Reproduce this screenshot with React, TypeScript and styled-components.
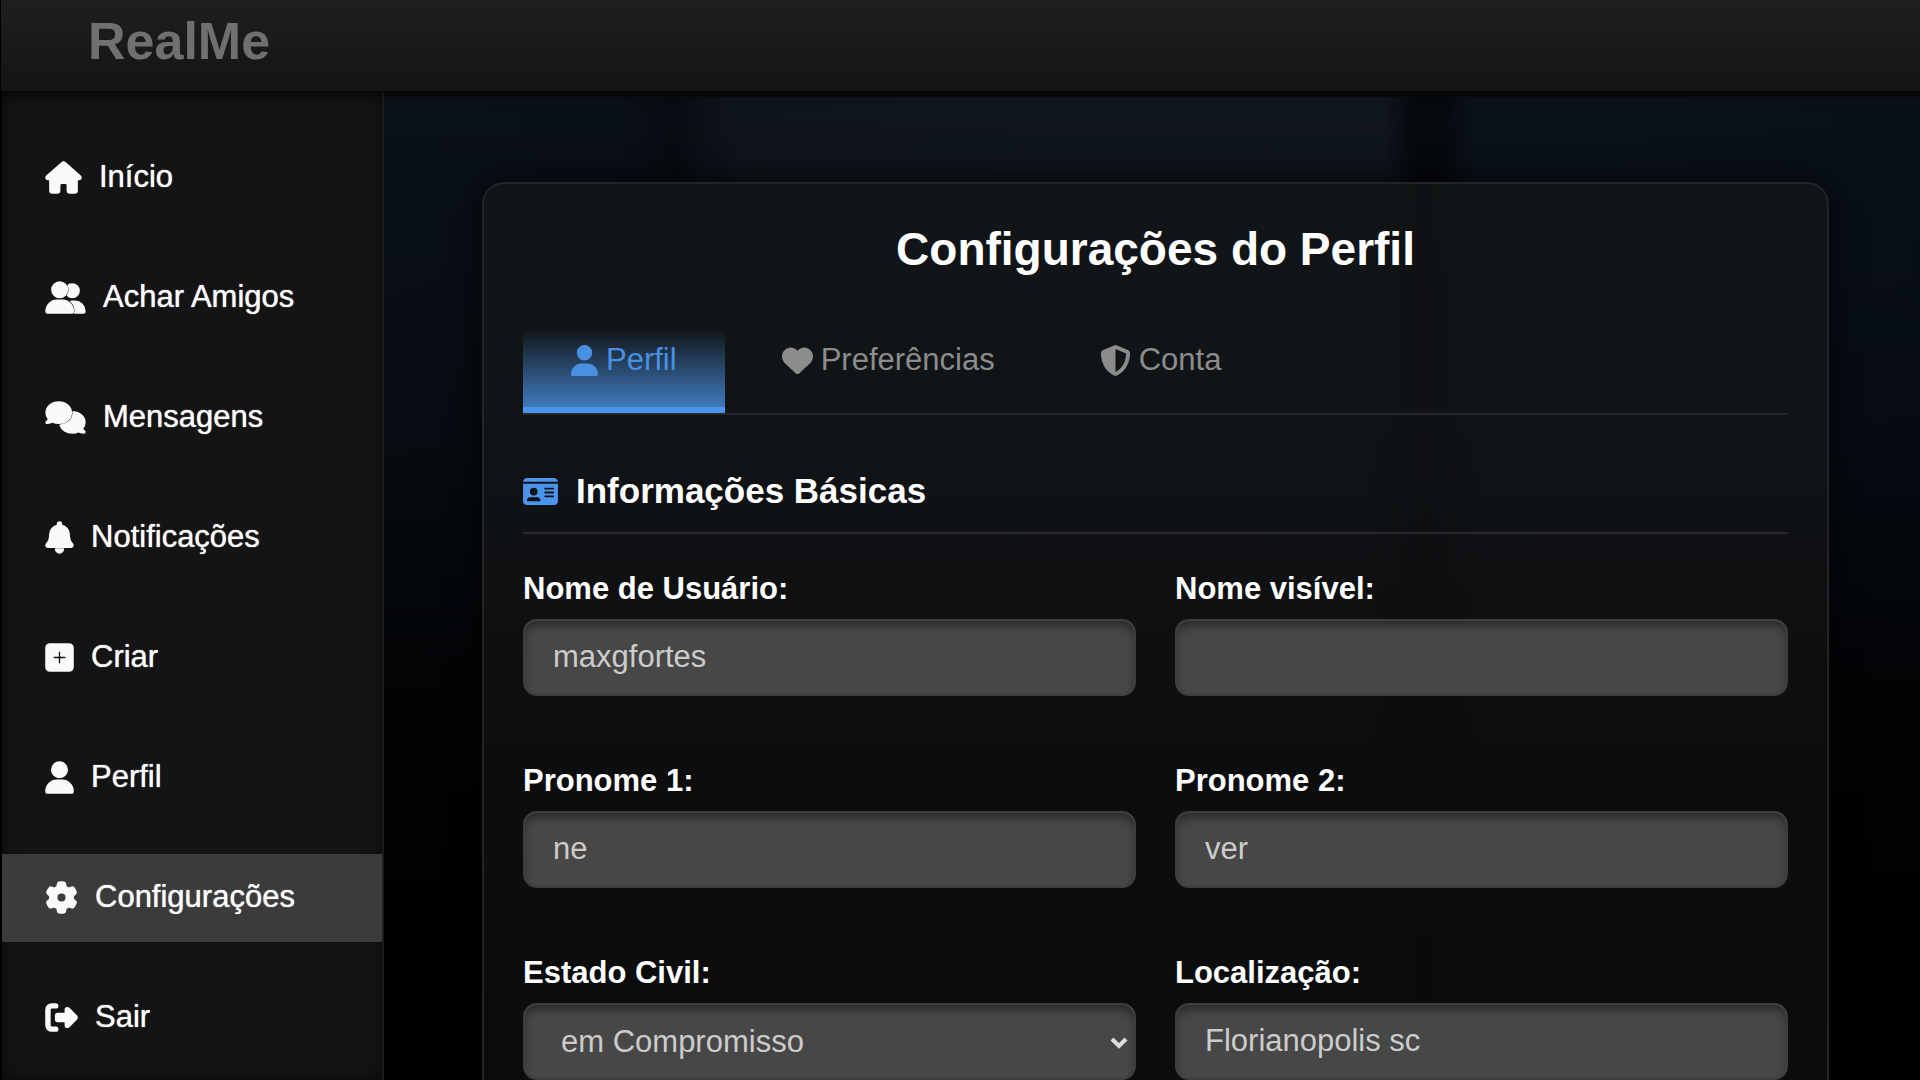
import React, { useState } from "react";
import styled, { createGlobalStyle } from "styled-components";
import type { IconType } from "react-icons";
import {
  FaBell,
  FaComments,
  FaGear,
  FaHeart,
  FaHouse,
  FaIdCard,
  FaRightFromBracket,
  FaShieldHalved,
  FaSquarePlus,
  FaUser,
  FaUserGroup,
} from "react-icons/fa6";

const GlobalStyle = createGlobalStyle`
  * { box-sizing: border-box; }
  body {
    margin: 0;
    background: #000;
    color: #fff;
    font-family: "Liberation Sans", Arial, Helvetica, sans-serif;
    font-size: 31px;
    line-height: 36px;
  }
`;

const Page = styled.div`
  display: flex;
  flex-direction: column;
  height: 100vh;
  overflow: hidden;
`;

const Header = styled.header`
  position: relative;
  z-index: 1;
  flex: none;
  display: flex;
  align-items: center;
  padding: 11px 87px 20px;
  border-left: 1px solid #000;
  background: linear-gradient(#1f1f1f, #141414);
  box-shadow: 0 0 8px 2px rgba(0, 0, 0, 0.7);
`;

const Brand = styled.a`
  color: #707070;
  font-size: 52px;
  font-weight: bold;
  line-height: 60px;
  text-decoration: none;
`;

const Body = styled.div`
  flex: 1;
  min-height: 0;
  display: flex;
`;

const Sidebar = styled.nav`
  flex: none;
  width: 384px;
  padding-top: 43px;
  border-left: 2px solid #000;
  border-right: 2px solid #1b1b1b;
  background: #141414;
  box-shadow: inset 0 0 16px rgba(0, 0, 0, 0.6);
`;

const NavList = styled.ul`
  display: flex;
  flex-direction: column;
  gap: 32px;
  margin: 0;
  padding: 0;
  list-style: none;
`;

/* Font Awesome glyphs share one height; their widths follow the glyph's own units (512 = 1em). */
const Glyph = styled.span<{ $units: number }>`
  flex: none;
  display: block;
  width: ${(p) => Math.round((p.$units / 512) * 31)}px;
  height: 31px;

  svg {
    display: block;
    width: 100%;
    height: 100%;
    overflow: visible;
  }
`;

const NavLink = styled.a<{ $active: boolean }>`
  display: flex;
  align-items: center;
  gap: 18px;
  height: 88px;
  padding: 0 44px 2px;
  background: ${(p) => (p.$active ? "#3b3b3b" : "transparent")};
  color: #fafafa;
  text-decoration: none;
  text-shadow: 0 0 1px #fff;

  ${Glyph} path {
    stroke: currentColor;
    stroke-width: 26;
    stroke-linejoin: round;
  }
`;

const Main = styled.main`
  flex: 1;
  min-width: 0;
  overflow: auto;
  scrollbar-width: none;
  padding: 85px 91px 92px 98px;
  border-top: 6px solid #0a0b0b;
  background:
    linear-gradient(
      rgba(0, 0, 0, 0) 0%,
      rgba(0, 0, 0, 0.3) 35%,
      rgba(0, 0, 0, 0.8) 60%,
      #000 90%
    ),
    linear-gradient(
      90deg,
      #0a1119 0%,
      #0a1019 15%,
      #080c12 19%,
      #0c1118 21%,
      #0f151c 23%,
      #10161e 45%,
      #10161e 65%,
      #06090e 67%,
      #06090e 69%,
      #0b121c 71%,
      #09101a 100%
    );
`;

const Panel = styled.section`
  padding: 37px 39px;
  border: 2px solid #222425;
  border-radius: 22px;
  background:
    linear-gradient(90deg, transparent 65%, rgba(0, 0, 0, 0.15) 70%, transparent 75%),
    linear-gradient(#121517, #111417 25%, #0c0d0e 60%, #0b0c0c);
  box-shadow: 0 0 32px rgba(0, 0, 0, 0.8);
`;

const Title = styled.h1`
  margin: 0;
  font-size: 46px;
  line-height: 56px;
  text-align: center;
`;

const Tabs = styled.div`
  display: flex;
  gap: 9px;
  margin-top: 52px;
  border-bottom: 2px solid #26282a;
`;

const Tab = styled.button<{ $active: boolean }>`
  display: flex;
  align-items: center;
  gap: 8px;
  padding: 13px 48px 29px;
  border: 0;
  border-bottom: 6px solid ${(p) => (p.$active ? "#4a94ee" : "transparent")};
  background: ${(p) =>
    p.$active ? "linear-gradient(rgba(74, 144, 226, 0), rgba(74, 144, 226, 0.82)) padding-box" : "none"};
  color: ${(p) => (p.$active ? "#4a90e2" : "#8c8c8c")};
  font: inherit;
  cursor: pointer;
`;

const SectionTitle = styled.h2`
  display: flex;
  align-items: center;
  gap: 18px;
  margin: 56px 0 0;
  padding-bottom: 21px;
  border-bottom: 2px solid #26282a;
  font-size: 35px;
  line-height: 40px;

  ${Glyph} {
    color: #4a94ee;
  }
`;

const Form = styled.form`
  display: grid;
  grid-template-columns: 1fr 1fr;
  gap: 67px 39px;
  margin-top: 37px;
`;

const Field = styled.div`
  display: flex;
  flex-direction: column;
  gap: 12px;
`;

const Label = styled.label`
  font-weight: bold;
`;

const control = `
  display: block;
  width: 100%;
  height: 77px;
  border: 2px solid #3e3e3e;
  border-radius: 14px;
  background: #474747;
  box-shadow: inset 0 6px 10px -2px rgba(0, 0, 0, 0.45);
  color: #ccc;
  font: inherit;
  outline: none;
`;

const Input = styled.input`
  ${control}
  padding: 0 28px 2px;
`;

const SelectBox = styled.div`
  position: relative;
`;

const Select = styled.select`
  ${control}
  appearance: none;
  padding: 0 60px 0 36px;
`;

const Chevron = styled.svg`
  position: absolute;
  top: 34px;
  right: 8px;
  width: 18px;
  height: 12px;
  pointer-events: none;
`;

type Item = { label: string; icon: IconType; units: number };

const NAV: Item[] = [
  { label: "Início", icon: FaHouse, units: 576 },
  { label: "Achar Amigos", icon: FaUserGroup, units: 640 },
  { label: "Mensagens", icon: FaComments, units: 640 },
  { label: "Notificações", icon: FaBell, units: 448 },
  { label: "Criar", icon: FaSquarePlus, units: 448 },
  { label: "Perfil", icon: FaUser, units: 448 },
  { label: "Configurações", icon: FaGear, units: 512 },
  { label: "Sair", icon: FaRightFromBracket, units: 512 },
];

const TABS: Item[] = [
  { label: "Perfil", icon: FaUser, units: 448 },
  { label: "Preferências", icon: FaHeart, units: 512 },
  { label: "Conta", icon: FaShieldHalved, units: 512 },
];

function TextField({ id, label, value = "" }: { id: string; label: string; value?: string }) {
  return (
    <Field>
      <Label htmlFor={id}>{label}</Label>
      <Input id={id} name={id} type="text" defaultValue={value} />
    </Field>
  );
}

export default function App() {
  const [tab, setTab] = useState("Perfil");

  return (
    <Page>
      <GlobalStyle />
      <Header>
        <Brand href="#">RealMe</Brand>
      </Header>
      <Body>
        <Sidebar>
          <NavList>
            {NAV.map(({ label, icon: Icon, units }) => (
              <li key={label}>
                <NavLink href="#" $active={label === "Configurações"}>
                  <Glyph $units={units} aria-hidden>
                    <Icon />
                  </Glyph>
                  {label}
                </NavLink>
              </li>
            ))}
          </NavList>
        </Sidebar>
        <Main>
          <Panel>
            <Title>Configurações do Perfil</Title>
            <Tabs role="tablist">
              {TABS.map(({ label, icon: Icon, units }) => (
                <Tab
                  key={label}
                  type="button"
                  role="tab"
                  aria-selected={tab === label}
                  $active={tab === label}
                  onClick={() => setTab(label)}
                >
                  <Glyph $units={units} aria-hidden>
                    <Icon />
                  </Glyph>
                  {label}
                </Tab>
              ))}
            </Tabs>
            <SectionTitle>
              <Glyph $units={576} aria-hidden>
                <FaIdCard />
              </Glyph>
              Informações Básicas
            </SectionTitle>
            <Form>
              <TextField id="username" label="Nome de Usuário:" value="maxgfortes" />
              <TextField id="displayname" label="Nome visível:" />
              <TextField id="pronoun1" label="Pronome 1:" value="ne" />
              <TextField id="pronoun2" label="Pronome 2:" value="ver" />
              <Field>
                <Label htmlFor="status">Estado Civil:</Label>
                <SelectBox>
                  <Select id="status" name="status" defaultValue="em Compromisso">
                    <option>em Compromisso</option>
                  </Select>
                  <Chevron viewBox="0 0 18 12" aria-hidden>
                    <path d="M2 2l7 7 7-7" fill="none" stroke="#ddd" strokeWidth="4" />
                  </Chevron>
                </SelectBox>
              </Field>
              <TextField id="location" label="Localização:" value="Florianopolis sc" />
            </Form>
          </Panel>
        </Main>
      </Body>
    </Page>
  );
}
